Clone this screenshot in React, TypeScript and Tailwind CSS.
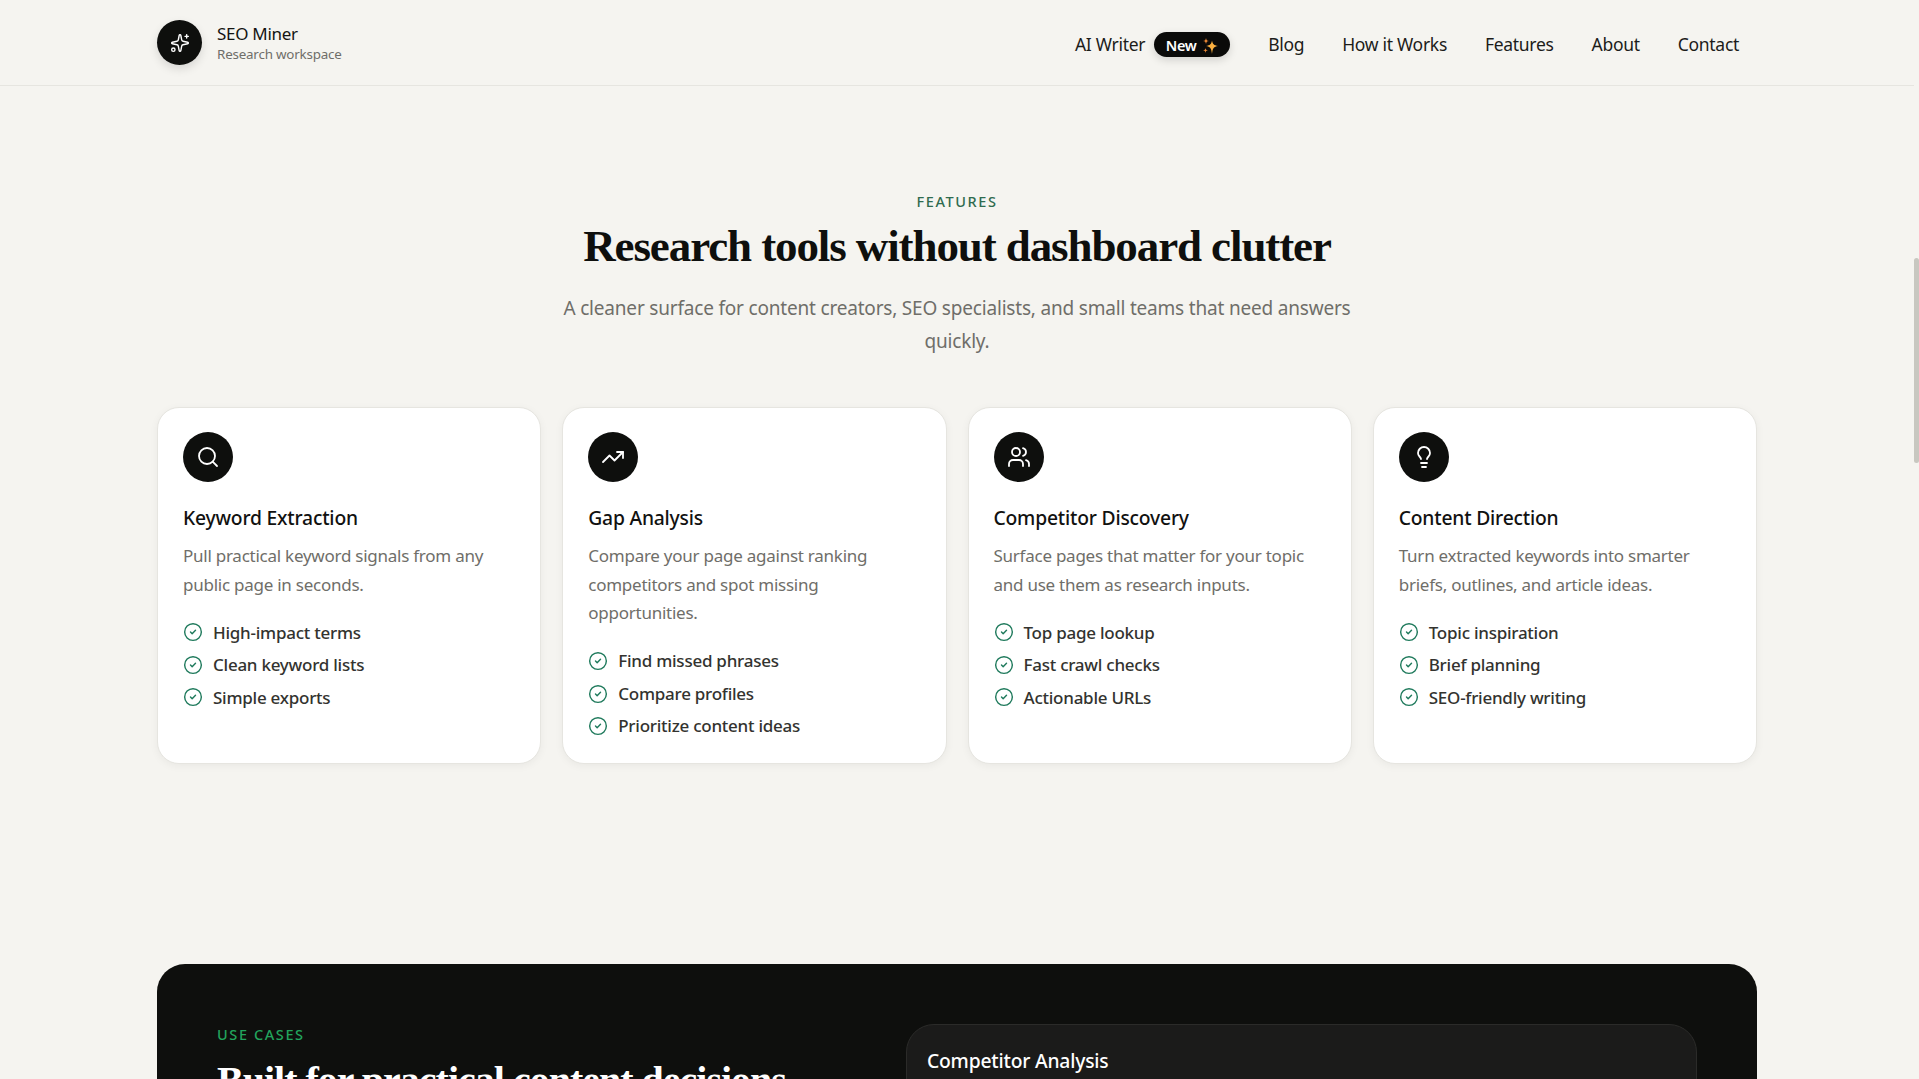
import { CircleCheck, Lightbulb, Search, Sparkles, TrendingUp, Users } from "lucide-react";

const navLinks = ["Blog", "How it Works", "Features", "About", "Contact"];

const features = [
  {
    icon: Search,
    title: "Keyword Extraction",
    text: "Pull practical keyword signals from any public page in seconds.",
    points: ["High-impact terms", "Clean keyword lists", "Simple exports"],
  },
  {
    icon: TrendingUp,
    title: "Gap Analysis",
    text: "Compare your page against ranking competitors and spot missing opportunities.",
    points: ["Find missed phrases", "Compare profiles", "Prioritize content ideas"],
  },
  {
    icon: Users,
    title: "Competitor Discovery",
    text: "Surface pages that matter for your topic and use them as research inputs.",
    points: ["Top page lookup", "Fast crawl checks", "Actionable URLs"],
  },
  {
    icon: Lightbulb,
    title: "Content Direction",
    text: "Turn extracted keywords into smarter briefs, outlines, and article ideas.",
    points: ["Topic inspiration", "Brief planning", "SEO-friendly writing"],
  },
];

const sans = "font-['Noto_Sans','Open_Sans',sans-serif]";
const serif = "font-['Liberation_Serif',serif]";

function Header() {
  return (
    <header className="h-[86px] border-b border-[#e6e5e0]">
      <div className="mx-auto flex h-full w-[1600px] items-center justify-between pr-[18px]">
        <div className="flex items-center gap-[15px]">
          <div className="flex h-[45px] w-[45px] items-center justify-center rounded-full bg-[#0e0f0d] text-white shadow-[0_4px_10px_rgba(0,0,0,0.12)]">
            <Sparkles size={20} strokeWidth={1.7} />
          </div>
          <div className="flex flex-col pt-[1px]">
            <span className="text-[17px] leading-[22px] tracking-[-0.3px] text-[#141412]">SEO Miner</span>
            <span className="text-[13.4px] leading-[18px] tracking-[-0.2px] text-[#6f6e69]">Research workspace</span>
          </div>
        </div>
        <nav className="flex items-center gap-[38px] pt-[2px] text-[17.5px] leading-[24px] tracking-[-0.3px] text-[#1c1c1a]">
          <div className="flex items-center gap-[9px]">
            <span>AI Writer</span>
            <span className="flex h-[25px] w-[76px] translate-y-[1px] items-center justify-center gap-[4px] rounded-full bg-[#0a0a09] pt-[2px] text-[14.5px] font-semibold leading-none text-white shadow-[0_3px_8px_rgba(0,0,0,0.15)]">
              New
              <svg width="18" height="18" viewBox="0 0 18 18">
                <path d="M11 3.5 C11.7 7.2 12.8 8.3 17 9 C12.8 9.7 11.7 11 11 17 C10.3 11 9.2 9.7 5 9 C9.2 8.3 10.3 7.2 11 3.5 Z" fill="#fbb040" />
                <path d="M5 1 C5.4 3.2 5.8 3.6 8 4 C5.8 4.4 5.4 4.8 5 7 C4.6 4.8 4.2 4.4 2 4 C4.2 3.6 4.6 3.2 5 1 Z" fill="#f08a35" />
                <path d="M4.5 11 C4.8 12.6 5.2 13 7 13.3 C5.2 13.6 4.8 14 4.5 16 C4.2 14 3.8 13.6 2 13.3 C3.8 13 4.2 12.6 4.5 11 Z" fill="#f08a35" />
              </svg>
            </span>
          </div>
          {navLinks.map((link) => (
            <span key={link}>{link}</span>
          ))}
        </nav>
      </div>
    </header>
  );
}

function FeatureCard({ icon: Icon, title, text, points }: (typeof features)[number]) {
  return (
    <div className="rounded-[22px] border border-[#e6e5e0] bg-white px-[25px] py-[24px] shadow-[0_2px_8px_rgba(20,20,15,0.05)]">
      <div className="flex h-[50px] w-[50px] items-center justify-center rounded-full bg-[#0e0f0d] text-white">
        <Icon size={24} strokeWidth={1.8} />
      </div>
      <h3 className="mt-[22px] text-[19.3px] font-medium leading-[28px] tracking-[-0.2px] text-[#111110]">{title}</h3>
      <p className="mt-[10px] text-[17px] leading-[28.7px] tracking-[-0.25px] text-[#6f6e69]">{text}</p>
      <ul className="mt-[20px] flex flex-col gap-[6.5px]">
        {points.map((point) => (
          <li key={point} className="flex h-[26px] items-center gap-[10px] text-[17px] font-medium tracking-[-0.25px] text-[#33332f]">
            <CircleCheck size={20} strokeWidth={1.7} className="shrink-0 text-[#1f7a5c]" />
            {point}
          </li>
        ))}
      </ul>
    </div>
  );
}

export default function App() {
  return (
    <div className={`flex h-screen overflow-hidden bg-[#f5f4f0] ${sans}`}>
      <div className="min-w-0 flex-1">
        <Header />

        <section className="pt-[105px] text-center">
          <p className="text-[14.5px] font-medium uppercase leading-[20px] tracking-[1.6px] text-[#2f6b4f]">Features</p>
          <h2 className={`mt-[8px] text-[45px] font-bold leading-[54px] tracking-[-1.1px] text-[#0e0f0d] ${serif}`}>
            Research tools without dashboard clutter
          </h2>
          <p className="mx-auto mt-[19px] w-[816px] text-[19px] leading-[33px] tracking-[-0.19px] text-[#6f6e69]">
            A cleaner surface for content creators, SEO specialists, and small teams that need answers quickly.
          </p>
        </section>

        <div className="mx-auto mt-[49px] grid w-[1600px] grid-cols-4 gap-[21px]">
          {features.map((feature) => (
            <FeatureCard key={feature.title} {...feature} />
          ))}
        </div>

        <section className="mx-auto mt-[200px] flex h-[500px] w-[1600px] justify-between rounded-[28px] bg-[#0e0f0d] px-[60px] pt-[60px]">
          <div>
            <p className="text-[14.5px] font-medium uppercase leading-[20px] tracking-[1.6px] text-[#22a45d]">Use cases</p>
            <h2 className={`mt-[13px] text-[40px] font-bold leading-[48px] tracking-[-1px] text-white ${serif}`}>
              Built for practical content decisions
            </h2>
          </div>
          <div className="h-[400px] w-[791px] rounded-[28px] border border-[#2b2b29] bg-[#1b1b1a] px-[20px] py-[22px]">
            <h3 className="text-[19.3px] font-medium leading-[28px] tracking-[-0.2px] text-white">Competitor Analysis</h3>
          </div>
        </section>
      </div>

      <aside className="w-[5px] shrink-0">
        <div className="mt-[258px] h-[205px] rounded-[3px] bg-[#c8c7c0]" />
      </aside>
    </div>
  );
}
